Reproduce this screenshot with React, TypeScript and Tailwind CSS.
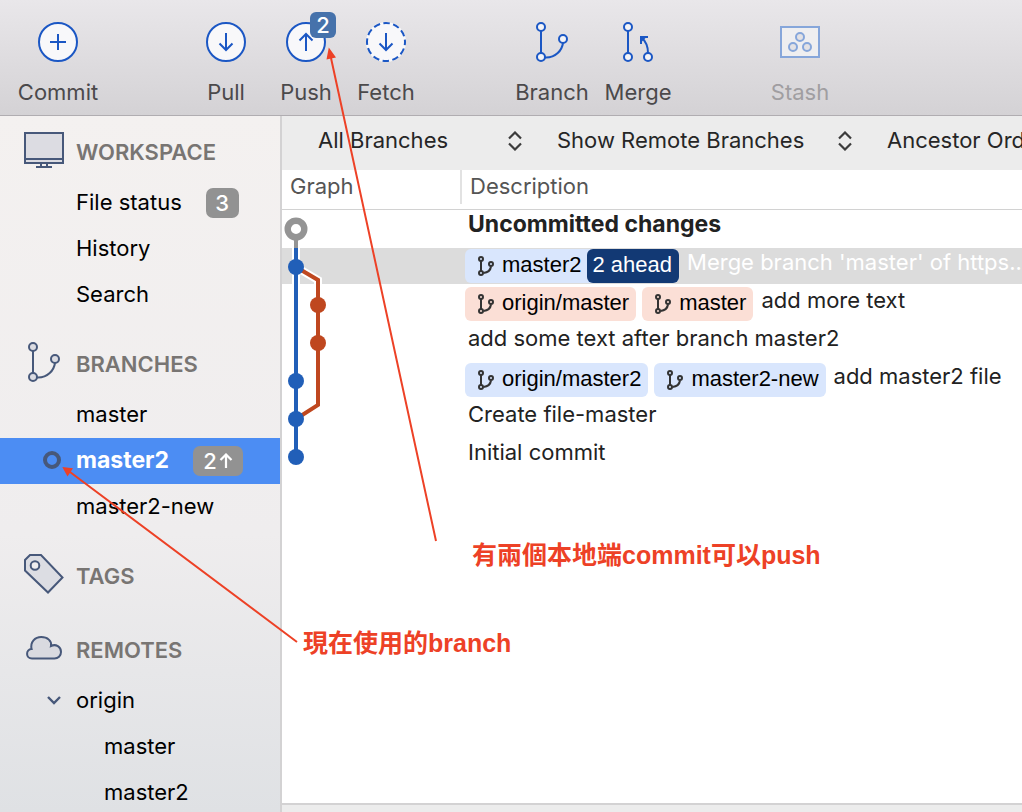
import type { ReactNode } from "react";

const BLUE = "#1b57c4";
const SLATE = "#47587a";

function ToolButton({
  label,
  children,
  badge,
  disabled,
  className = "",
}: {
  label: string;
  children: ReactNode;
  badge?: string;
  disabled?: boolean;
  className?: string;
}) {
  return (
    <button
      type="button"
      disabled={disabled}
      className={`flex w-20 flex-none flex-col items-center ${disabled ? "text-[#a09ea1]" : "text-[#4b494b]"} ${className}`}
    >
      <span className="relative block">
        {children}
        {badge && (
          <span className="absolute -top-[10px] left-6 flex size-[26px] items-center justify-center rounded-md bg-[#4672ab] text-[22px] font-medium text-white">
            {badge}
          </span>
        )}
      </span>
      <span className="mt-4 text-[22px] leading-7">{label}</span>
    </button>
  );
}

function CircleIcon({ d, dashed }: { d: string; dashed?: boolean }) {
  return (
    <svg className="size-10" viewBox="0 0 40 40" fill="none" stroke={BLUE} strokeWidth="2" aria-hidden="true">
      <circle cx="20" cy="20" r="20" fill={dashed ? "#f8f8fa" : "none"} stroke="none" />
      <circle
        cx="20"
        cy="20"
        r="19"
        fill="#f8f8fa"
        strokeDasharray={dashed ? "6.6 3.35" : undefined}
        strokeDashoffset={dashed ? 3.3 : undefined}
      />
      <path d={d} />
    </svg>
  );
}

const DOWN = "M20 11V28M13.5 21.5L20 28L26.5 21.5";
const UP = "M20 29V12M13.5 18.5L20 12L26.5 18.5";
const PLUS = "M20 12V28M12 20H28";

function BranchIcon({ color, fill, className }: { color: string; fill: string; className: string }) {
  return (
    <svg className={className} viewBox="0 0 32 40" fill="none" stroke={color} strokeWidth="2" aria-hidden="true">
      <path d="M5 9V31M9 35.5C20 36 26 28 27 21" />
      <circle cx="5" cy="5" r="4" fill={fill} />
      <circle cx="5" cy="35" r="4" fill={fill} />
      <circle cx="27" cy="17" r="4" fill={fill} />
    </svg>
  );
}

function SmallBranchIcon() {
  return (
    <svg className="h-5 w-4 flex-none" viewBox="0 0 16 20" fill="none" stroke="#333" strokeWidth="2" aria-hidden="true">
      <path d="M3 5V15M5.5 17C10 16.5 12.5 14 13 10.5" />
      <circle cx="3" cy="3" r="2" />
      <circle cx="3" cy="17" r="2" />
      <circle cx="13" cy="8" r="2" />
    </svg>
  );
}

function SectionHeader({ title, icon, first }: { title: string; icon: ReactNode; first?: boolean }) {
  return (
    <div className={`flex items-center pb-0.5 ${first ? "h-[54px]" : "h-[74px] pt-5"}`}>
      <span className={`flex w-[76px] flex-none pl-6 ${first ? "" : "pb-1"}`}>{icon}</span>
      <h2 className="text-[22px] font-semibold text-[#787573]">{title}</h2>
    </div>
  );
}

function SideItem({
  label,
  badge,
  selected,
  nested,
  lead,
}: {
  label: string;
  badge?: ReactNode;
  selected?: boolean;
  nested?: boolean;
  lead?: ReactNode;
}) {
  return (
    <button
      type="button"
      className={`flex h-[46px] w-full items-center pb-0.5 text-left ${
        selected ? "bg-[#4c8df3] text-[23px] font-bold text-white" : "text-[22px] text-black"
      }`}
    >
      <span className={`flex flex-none ${nested ? "w-[104px]" : "w-[76px]"}`}>{lead}</span>
      <span>{label}</span>
      {badge}
    </button>
  );
}

function Filter({ label, options, className }: { label: string; options: string[]; className: string }) {
  return (
    <div className="flex flex-none items-center">
      <select aria-label={label} className={`appearance-none bg-transparent pb-0.5 outline-none ${className}`}>
        {options.map((o) => (
          <option key={o}>{o}</option>
        ))}
      </select>
      <svg className="h-5 w-4" viewBox="0 0 16 20" fill="none" stroke="#3c3c3c" strokeWidth="2.2" aria-hidden="true">
        <path d="M2 7.500L8 1.500L14 7.500M2 12.500L8 18.500L14 12.500" />
      </svg>
    </div>
  );
}

type Chip = { name: string; tone: "blue" | "red"; ahead?: string };
type Commit = { text: string; chips?: Chip[]; bold?: boolean; selected?: boolean };

const commits: Commit[] = [
  { text: "Uncommitted changes", bold: true },
  {
    text: "Merge branch 'master' of https..",
    chips: [{ name: "master2", tone: "blue", ahead: "2 ahead" }],
    selected: true,
  },
  {
    text: "add more text",
    chips: [
      { name: "origin/master", tone: "red" },
      { name: "master", tone: "red" },
    ],
  },
  { text: "add some text after branch master2" },
  {
    text: "add master2 file",
    chips: [
      { name: "origin/master2", tone: "blue" },
      { name: "master2-new", tone: "blue" },
    ],
  },
  { text: "Create file-master" },
  { text: "Initial commit" },
];

function BranchChip({ name, tone, ahead }: Chip) {
  return (
    <span
      className={`mt-px flex h-[34px] flex-none items-center rounded-md pl-[13px] font-['Liberation_Sans',Arial,sans-serif] text-black ${
        tone === "blue" ? "bg-[#d9e6fd]" : "bg-[#fbdfd6]"
      } ${ahead ? "" : "pr-[7px]"}`}
    >
      <SmallBranchIcon />
      <span className="ml-2 pb-1">{name}</span>
      {ahead && (
        <span className="ml-1.5 flex h-full items-center rounded-md bg-[#123974] pr-[7px] pb-1 pl-[5px] text-white">
          {ahead}
        </span>
      )}
    </span>
  );
}

function Graph() {
  const brown = "M14 57L36 70V195L14 209";
  return (
    <svg className="absolute top-0 left-0 z-10 h-[266px] w-[60px]" viewBox="0 0 60 266" fill="none" aria-hidden="true">
      <path d="M14 38V74M14 57L36 70V74" stroke="#fff" strokeWidth="8" />
      <path d={brown} stroke="#bf471f" strokeWidth="4" />
      <path d="M14 38V247" stroke="#215fb8" strokeWidth="4" />
      <path d="M14 30V38" stroke="#949494" strokeWidth="4" />
      <circle cx="14" cy="19" r="8.3" fill="#fff" stroke="#949494" strokeWidth="6.4" />
      {[57, 171, 209, 247].map((y) => (
        <circle key={y} cx="14" cy={y} r="8" fill="#215fb8" />
      ))}
      {[95, 133].map((y) => (
        <circle key={y} cx="36" cy={y} r="8" fill="#bf471f" />
      ))}
    </svg>
  );
}

function CommitRow({ commit, first }: { commit: Commit; first: boolean }) {
  const bg = commit.selected ? "bg-[#dcdcdc]" : "";
  return (
    <tr className="h-[38px]">
      <td className={`p-0 align-top ${first ? "relative" : ""}`}>
        <div className={`h-9 ${bg}`} />
        {first && <Graph />}
      </td>
      <td className="p-0 align-top">
        <div className={`flex h-9 items-start pl-[3px] whitespace-nowrap ${bg}`}>
          {commit.chips && (
            <span className="mr-2 flex gap-1.5">
              {commit.chips.map((c) => (
                <BranchChip key={c.name} {...c} />
              ))}
            </span>
          )}
          <span
            className={`leading-7 ${commit.bold ? "text-[23px] font-bold" : ""} ${
              commit.selected ? "text-white" : "text-[#222]"
            } ${commit.chips ? "" : "pl-[3px]"}`}
          >
            {commit.text}
          </span>
        </div>
      </td>
    </tr>
  );
}

export default function App() {
  return (
    <div className="relative flex h-screen flex-col overflow-hidden bg-white font-[Inter,'Noto_Sans_CJK_TC',sans-serif] text-[22px]">
      <header className="flex h-[116px] flex-none items-start border-b border-[#b0adb1] bg-linear-to-b from-[#e9e7ea] to-[#d4d2d5] pt-[22px] pl-[18px]">
        <ToolButton label="Commit">
          <CircleIcon d={PLUS} />
        </ToolButton>
        <ToolButton label="Pull" className="ml-[88px]">
          <CircleIcon d={DOWN} />
        </ToolButton>
        <ToolButton label="Push" badge="2">
          <CircleIcon d={UP} />
        </ToolButton>
        <ToolButton label="Fetch">
          <CircleIcon d={DOWN} dashed />
        </ToolButton>
        <ToolButton label="Branch" className="ml-[86px]">
          <BranchIcon color={BLUE} fill="#f4f4f7" className="h-10 w-8" />
        </ToolButton>
        <ToolButton label="Merge" className="ml-1.5">
          <svg className="h-10 w-8" viewBox="0 0 32 40" fill="none" stroke={BLUE} strokeWidth="2" aria-hidden="true">
            <path d="M6 9V31M26 31C26 24 23.500 19 19.500 15.500" />
            <path d="M19 22V15H26" />
            <path d="M19 15L24 15.500L19.500 20Z" fill={BLUE} stroke="none" />
            <circle cx="6" cy="5" r="4" fill="#f4f4f7" />
            <circle cx="6" cy="35" r="4" fill="#f4f4f7" />
            <circle cx="26" cy="35" r="4" fill="#f4f4f7" />
          </svg>
        </ToolButton>
        <ToolButton label="Stash" className="ml-[82px]" disabled>
          <svg className="size-10" viewBox="0 0 40 40" fill="none" stroke="#86a6da" strokeWidth="2" aria-hidden="true">
            <rect x="1" y="5" width="38" height="30" fill="#eeeef0" />
            <circle cx="20" cy="15" r="4" fill="#e3e2e5" />
            <circle cx="13" cy="25" r="4" fill="#e3e2e5" />
            <circle cx="27" cy="25" r="4" fill="#e3e2e5" />
          </svg>
        </ToolButton>
      </header>

      <div className="flex min-h-0 flex-1">
        <nav className="w-[282px] flex-none overflow-hidden border-r-2 border-[#d3d2d3] bg-linear-to-b from-[#f4f1f0] via-[#efedee] via-60% to-[#dfe1e4] pt-2.5">
          <SectionHeader
            first
            title="WORKSPACE"
            icon={
              <svg className="h-10 w-10" viewBox="0 0 40 40" fill="none" stroke={SLATE} strokeWidth="2" aria-hidden="true">
                <rect x="1" y="1" width="38" height="30" fill="#dcdce2" />
                <path d="M1 27H39M12 35H28M17 31V35M23 31V35" />
              </svg>
            }
          />
          <SideItem
            label="File status"
            badge={
              <span className="mt-0.5 ml-6 flex h-[30px] w-[33px] items-center justify-center rounded-[7px] bg-[#929292] font-medium text-white">
                3
              </span>
            }
          />
          <SideItem label="History" />
          <SideItem label="Search" />
          <SectionHeader
            title="BRANCHES"
            icon={<BranchIcon color={SLATE} fill="#dcdce2" className="ml-1 h-10 w-8" />}
          />
          <SideItem label="master" />
          <SideItem
            selected
            label="master2"
            lead={
              <svg className="ml-[42px] size-5" viewBox="0 0 20 20" fill="none" stroke={SLATE} strokeWidth="4" aria-hidden="true">
                <circle cx="10" cy="10" r="7" />
              </svg>
            }
            badge={
              <span className="mt-0.5 ml-6 flex h-[30px] w-[50px] items-center justify-center gap-0.5 rounded-[7px] bg-[#929292] text-[22px] font-medium text-white">
                2
                <svg className="h-4 w-[14px]" viewBox="0 0 14 16" fill="none" stroke="#fff" strokeWidth="2.2" aria-hidden="true">
                  <path d="M7 15V1.500M1.500 7L7 1.500L12.500 7" />
                </svg>
              </span>
            }
          />
          <SideItem label="master2-new" />
          <SectionHeader
            title="TAGS"
            icon={
              <svg className="h-10 w-10" viewBox="0 0 40 40" fill="#dcdde3" stroke={SLATE} strokeWidth="2" aria-hidden="true">
                <path d="M6 1H17L38.500 23.500L24 38.500L1 16.500V6Z" />
                <circle cx="11" cy="11.500" r="4.300" fill="#eeedef" />
              </svg>
            }
          />
          <SectionHeader
            title="REMOTES"
            icon={
              <svg className="ml-0.5 h-6 w-9" viewBox="0 0 36 24" fill="#d9dae0" stroke={SLATE} strokeWidth="2" aria-hidden="true">
                <path d="M6 22.500C-0.500 22.500-0.500 13.500 5.600 13C4 6 9 1 15.200 1C21.500 1 26 5 25 10C30 7.500 35 11 35 16C35 20 32 22.500 28.500 22.500Z" />
              </svg>
            }
          />
          <SideItem
            label="origin"
            lead={
              <svg className="ml-[46px] h-4 w-4" viewBox="0 0 16 16" fill="none" stroke={SLATE} strokeWidth="2.400" aria-hidden="true">
                <path d="M2 5L8 11L14 5" />
              </svg>
            }
          />
          <SideItem nested label="master" />
          <SideItem nested label="master2" />
        </nav>

        <main className="flex min-w-0 flex-1 flex-col">
          <div className="flex h-[54px] flex-none items-center overflow-hidden bg-[#ececec] pb-1 pl-9 text-[#262626]">
            <Filter label="Branches" options={["All Branches", "Current Branch"]} className="w-[189px]" />
            <span className="w-[34px] flex-none" />
            <Filter
              label="Remote branches"
              options={["Show Remote Branches", "Hide Remote Branches"]}
              className="w-[280px]"
            />
            <span className="w-[34px] flex-none" />
            <Filter label="Order" options={["Ancestor Order", "Date Order"]} className="w-[189px]" />
          </div>

          <div className="min-h-0 flex-1 overflow-hidden">
            <table className="w-full table-fixed border-separate border-spacing-0">
              <colgroup>
                <col className="w-[180px]" />
                <col />
              </colgroup>
              <thead>
                <tr className="h-10 text-left text-[#555]">
                  <th className="border-b border-[#d2d2d2] p-0 align-top font-normal">
                    <div className="h-[34px] border-r-2 border-[#e2e2e2] pl-2 leading-8">Graph</div>
                  </th>
                  <th className="border-b border-[#d2d2d2] p-0 align-top font-normal">
                    <div className="h-[34px] pl-2 leading-8">Description</div>
                  </th>
                </tr>
              </thead>
              <tbody>
                {commits.map((c, i) => (
                  <CommitRow key={c.text} commit={c} first={i === 0} />
                ))}
              </tbody>
            </table>
          </div>
          <footer className="h-[9px] flex-none border-t-2 border-[#d3d2d3] bg-[#ececec]" />
        </main>
      </div>

      <svg
        className="pointer-events-none absolute top-0 left-0 z-20 h-[812px] w-[1022px]"
        viewBox="0 0 1022 812"
        fill="#ed4126"
        stroke="#ed4126"
        strokeWidth="2"
        aria-hidden="true"
      >
        <path d="M436 541L331 58M297 642L70 472" />
        <path d="M328.800 47.500L326.500 59.500L336 57.500ZM62.300 467L73 468.300L67.500 476.500Z" stroke="none" />
      </svg>
      <p className="absolute top-[539px] left-[472px] font-['Liberation_Sans','Noto_Sans_CJK_TC',sans-serif] text-[25px] leading-8 font-bold whitespace-nowrap text-[#ed4126]">
        有兩個本地端commit可以push
      </p>
      <p className="absolute top-[627px] left-[303px] font-['Liberation_Sans','Noto_Sans_CJK_TC',sans-serif] text-[25px] leading-8 font-bold whitespace-nowrap text-[#ed4126]">
        現在使用的branch
      </p>
    </div>
  );
}
